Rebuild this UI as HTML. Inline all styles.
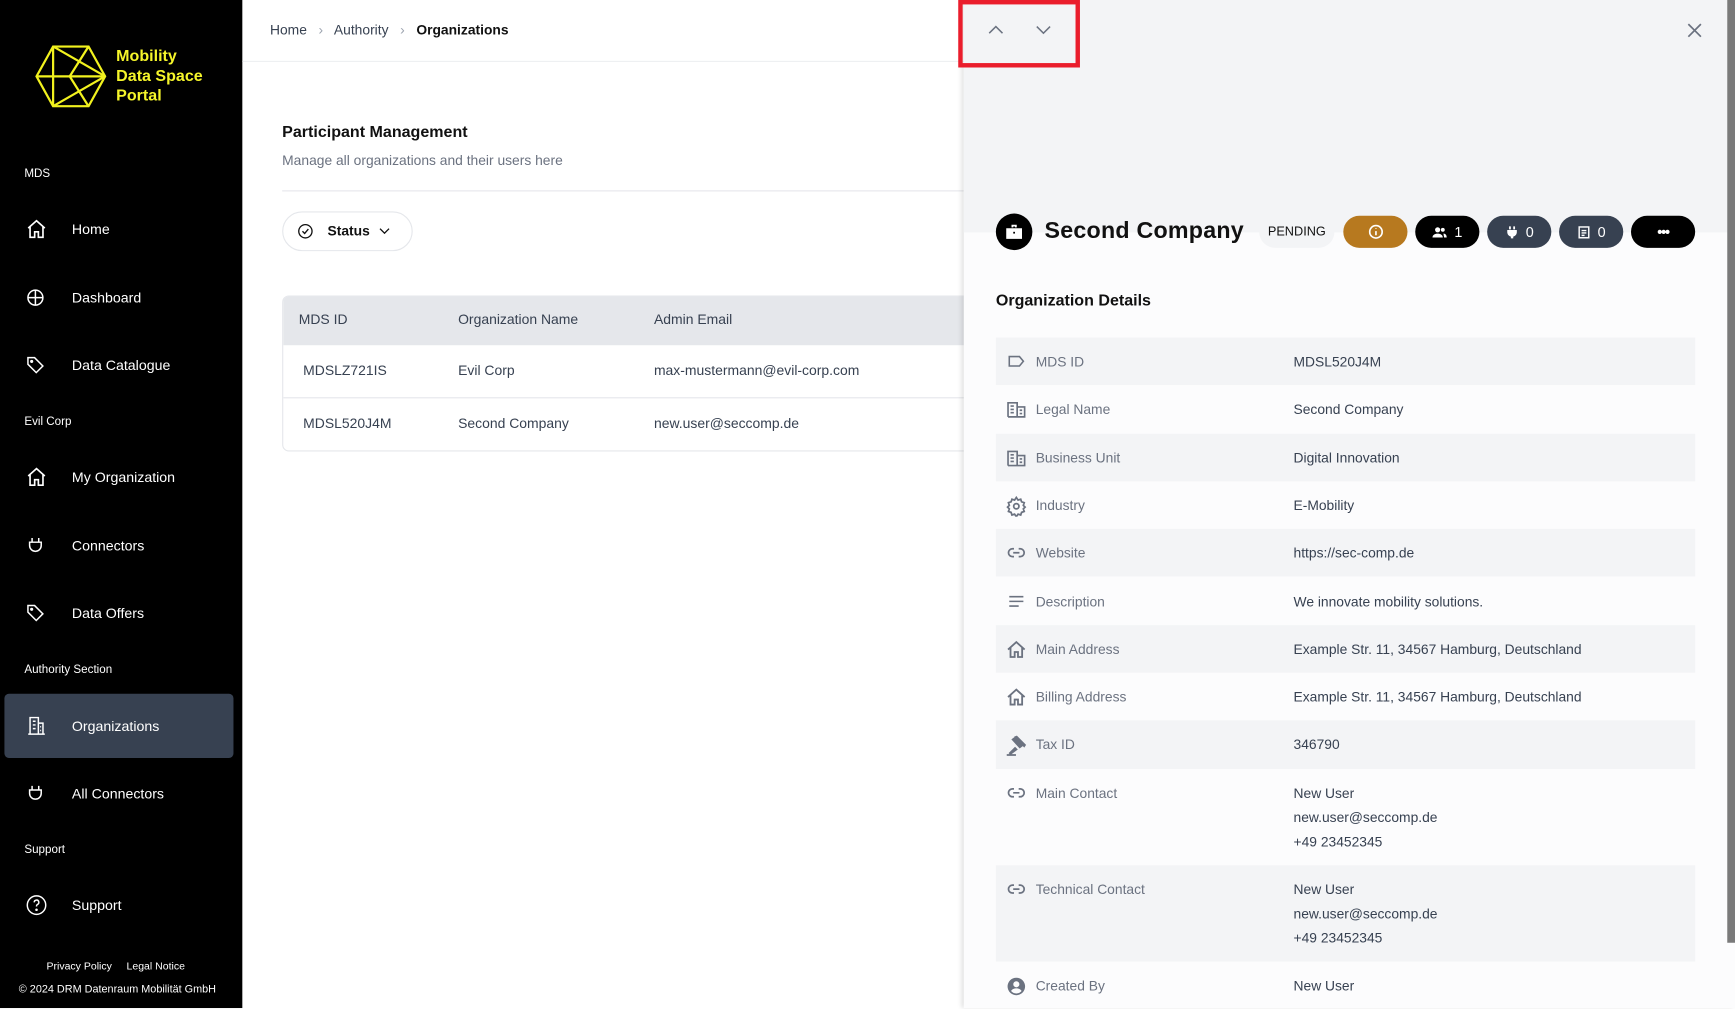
<!DOCTYPE html>
<html><head><meta charset="utf-8"><style>
*{box-sizing:border-box;margin:0;padding:0}
html,body{width:1735px;height:1008px;overflow:hidden;background:#fff;font-family:"Liberation Sans",sans-serif}
#w{position:absolute;left:0;top:0;width:1568px;height:911px;transform:scale(1.10651);transform-origin:0 0}
.a{position:absolute}
#sb{left:0;top:0;width:219px;height:911px;background:#000;color:#fff}
.sec{position:absolute;left:22px;font-size:10.5px;color:#fff}
.it{position:absolute;left:4px;width:207px;height:58px;font-size:12.8px;color:#fff}
.it span{position:absolute;left:61px;top:50%;transform:translateY(-50%)}
.it svg{position:absolute;left:19px;top:50%;transform:translateY(-50%)}
.t{font-size:12.6px;color:#374151}
.row{position:absolute;left:900px;width:632px;height:43.3px}
.row .l{position:absolute;left:36px;top:15px;font-size:12.5px;color:#6b7280}
.row .v{position:absolute;left:269px;top:15px;font-size:12.5px;color:#374151;line-height:22px;margin-top:-4px}
.row svg{position:absolute;left:9px;top:13px}
.g{background:#f3f4f6}
.pill{position:absolute;top:195px;height:29px;border-radius:15px;color:#fff;font-size:13px;display:flex;align-items:center;justify-content:center;gap:6px}
</style></head><body><div id="w">
<div id="sb" class="a">
<svg class="a" style="left:31px;top:41px" width="66" height="56" viewBox="0 0 66 56" fill="none" stroke="#f2f21e" stroke-width="2"><polygon points="17,1 49,1 64,28 49,55 17,55 2,28"/><line x1="2" y1="28" x2="64" y2="28"/><line x1="17" y1="1" x2="17" y2="55"/><path d="M17,1 L64,28 M49,1 L32,28 L49,55 M17,55 L64,28"/></svg>
<div class="a" style="left:105px;top:42px;color:#f5f52a;font-weight:bold;font-size:14.5px;line-height:18px">Mobility<br>Data Space<br>Portal</div>
<div class="sec" style="top:151px">MDS</div>
<div class="it" style="top:178px"><svg width="20" height="20" viewBox="0 0 24 24" fill="none" stroke="#fff" stroke-width="1.8"><path d="M3 11L12 3l9 8M5 9v12h5v-6h4v6h5V9"/></svg><span>Home</span></div>
<div class="it" style="top:240px"><svg width="18" height="18" viewBox="0 0 24 24" fill="none" stroke="#fff" stroke-width="1.8"><circle cx="12" cy="12" r="9"/><path d="M12 3v18M3 12h18"/></svg><span>Dashboard</span></div>
<div class="it" style="top:301px"><svg width="18" height="18" viewBox="0 0 24 24" fill="none" stroke="#fff" stroke-width="1.8"><path d="M3 3h8l10 10-8 8L3 11z"/><circle cx="7.5" cy="7.5" r="1"/></svg><span>Data Catalogue</span></div>
<div class="sec" style="top:375px">Evil Corp</div>
<div class="it" style="top:402px"><svg width="20" height="20" viewBox="0 0 24 24" fill="none" stroke="#fff" stroke-width="1.8"><path d="M3 11L12 3l9 8M5 9v12h5v-6h4v6h5V9"/></svg><span>My Organization</span></div>
<div class="it" style="top:464px"><svg width="18" height="18" viewBox="0 0 24 24" fill="none" stroke="#fff" stroke-width="1.8"><path d="M8 3v5M16 3v5M5 8h14v4a7 7 0 0 1-14 0z"/></svg><span>Connectors</span></div>
<div class="it" style="top:525px"><svg width="18" height="18" viewBox="0 0 24 24" fill="none" stroke="#fff" stroke-width="1.8"><path d="M3 3h8l10 10-8 8L3 11z"/><circle cx="7.5" cy="7.5" r="1"/></svg><span>Data Offers</span></div>
<div class="sec" style="top:599px">Authority Section</div>
<div class="it" style="top:627px;background:#374151;border-radius:4px"><svg width="20" height="20" viewBox="0 0 24 24" fill="none" stroke="#fff" stroke-width="1.6"><path d="M3 21h18M5 21V3h9v18M14 9h5v12M8 7h3M8 11h3M8 15h3M16 13h1M16 17h1"/></svg><span>Organizations</span></div>
<div class="it" style="top:688px"><svg width="18" height="18" viewBox="0 0 24 24" fill="none" stroke="#fff" stroke-width="1.8"><path d="M8 3v5M16 3v5M5 8h14v4a7 7 0 0 1-14 0z"/></svg><span>All Connectors</span></div>
<div class="sec" style="top:762px">Support</div>
<div class="it" style="top:789px"><svg width="20" height="20" viewBox="0 0 24 24" fill="none" stroke="#fff" stroke-width="1.6"><circle cx="12" cy="12" r="10"/><path d="M9.5 9a2.5 2.5 0 1 1 3.5 2.3c-.7.4-1 1-1 1.7v.5"/><circle cx="12" cy="17" r=".6" fill="#fff"/></svg><span>Support</span></div>
<div class="a" style="left:42px;top:868px;font-size:9.5px">Privacy Policy &nbsp;&nbsp;&nbsp; Legal Notice</div>
<div class="a" style="left:17px;top:889px;font-size:9.8px">© 2024 DRM Datenraum Mobilität GmbH</div>
</div>

<div class="a t" style="left:244px;top:20px;font-size:12.5px">Home <span style="color:#9ca3af;margin:0 7px">›</span> Authority <span style="color:#9ca3af;margin:0 7px">›</span> <b style="color:#111">Organizations</b></div>
<div class="a" style="left:219px;top:55px;width:652px;height:1px;background:#eef0f2"></div>
<div class="a" style="left:255px;top:112px;font-size:14.5px;font-weight:bold;color:#111">Participant Management</div>
<div class="a" style="left:255px;top:138px;font-size:12.5px;color:#6b7280">Manage all organizations and their users here</div>
<div class="a" style="left:255px;top:172px;width:616px;height:1px;background:#e5e7eb"></div>
<div class="a" style="left:255px;top:191px;width:118px;height:36px;border:1px solid #e5e7eb;border-radius:18px"></div>
<svg class="a" style="left:268px;top:201px" width="16" height="16" viewBox="0 0 24 24" fill="none" stroke="#111" stroke-width="1.8"><circle cx="12" cy="12" r="9"/><path d="M8 12l3 3 5-6"/></svg>
<div class="a" style="left:296px;top:202px;font-size:12.5px;font-weight:bold;color:#111">Status</div>
<svg class="a" style="left:340px;top:202px" width="15" height="14" viewBox="0 0 24 24" fill="none" stroke="#111" stroke-width="2"><path d="M5 8l7 7 7-7"/></svg>
<div class="a" style="left:255px;top:267px;width:640px;height:141px;border:1px solid #e5e7eb;border-radius:6px;overflow:hidden">
<div style="height:44px;background:#e5e7eb"></div><div style="height:48px;border-bottom:1px solid #e5e7eb"></div></div>
<div class="a t" style="left:270px;top:282px">MDS ID</div>
<div class="a t" style="left:414px;top:282px">Organization Name</div>
<div class="a t" style="left:591px;top:282px">Admin Email</div>
<div class="a t" style="left:274px;top:328px">MDSLZ721IS</div>
<div class="a t" style="left:414px;top:328px">Evil Corp</div>
<div class="a t" style="left:591px;top:328px">max-mustermann@evil-corp.com</div>
<div class="a t" style="left:274px;top:376px">MDSL520J4M</div>
<div class="a t" style="left:414px;top:376px">Second Company</div>
<div class="a t" style="left:591px;top:376px">new.user@seccomp.de</div>

<div class="a" style="left:871px;top:0;width:697px;height:911px;background:#fcfcfd;box-shadow:-2px 0 4px rgba(0,0,0,.12)"></div>
<div class="a" style="left:871px;top:0;width:691px;height:210px;background:#f3f4f6"></div>
<div class="a" style="left:1561px;top:0;width:7px;height:852px;background:#7a7a7a"></div>
<div class="a" style="left:866px;top:0;width:110px;height:61px;border:4px solid #ea1d2c"></div>
<svg class="a" style="left:890px;top:18px" width="20" height="18" viewBox="0 0 24 24" fill="none" stroke="#6b7280" stroke-width="1.8"><path d="M4 16l8-8 8 8"/></svg>
<svg class="a" style="left:933px;top:18px" width="20" height="18" viewBox="0 0 24 24" fill="none" stroke="#6b7280" stroke-width="1.8"><path d="M4 8l8 8 8-8"/></svg>
<svg class="a" style="left:1523px;top:19px" width="17" height="17" viewBox="0 0 24 24" fill="none" stroke="#6b7280" stroke-width="2.2"><path d="M4 4l16 16M20 4L4 20"/></svg>

<div class="a" style="left:900px;top:193px;width:33px;height:33px;border-radius:50%;background:#000"></div>
<svg class="a" style="left:907px;top:200px" width="19" height="19" viewBox="0 0 24 24" fill="#fff"><path d="M9 4h6v3h-2V6h-2v1H9zM3 8h18v12H3z"/><rect x="11" y="12" width="2" height="2" fill="#000"/></svg>
<div class="a" style="left:944px;top:197px;font-size:21px;font-weight:bold;color:#111;letter-spacing:0.2px">Second Company</div>
<div class="a" style="left:1138px;top:195px;width:68px;height:29px;border-radius:15px;background:#f3f4f6;font-size:11.5px;color:#111;display:flex;align-items:center;justify-content:center">PENDING</div>
<div class="pill" style="left:1214px;width:58px;background:#b7791f"><svg width="15" height="15" viewBox="0 0 24 24" fill="none" stroke="#fff" stroke-width="2.4"><circle cx="12" cy="12" r="9"/><path d="M12 11v6M12 7v1"/></svg></div>
<div class="pill" style="left:1279px;width:58px;background:#000"><svg width="14" height="14" viewBox="0 0 24 24" fill="#fff"><circle cx="9" cy="8" r="4"/><path d="M1 20c0-4 4-6 8-6s8 2 8 6z"/><circle cx="17" cy="8" r="3"/><path d="M18 14c3 0 5 2 5 6h-4z"/></svg>1</div>
<div class="pill" style="left:1344px;width:58px;background:#374151"><svg width="13" height="14" viewBox="0 0 24 24" fill="#fff"><path d="M7 2h3v5H7zM14 2h3v5h-3zM4 8h16v4a8 8 0 0 1-6 7v3h-4v-3a8 8 0 0 1-6-7z"/></svg>0</div>
<div class="pill" style="left:1409px;width:58px;background:#374151"><svg width="13" height="14" viewBox="0 0 24 24" fill="none" stroke="#fff" stroke-width="2.4"><rect x="4" y="3" width="16" height="18"/><path d="M8 9h8M8 13h8M8 17h5"/></svg>0</div>
<div class="pill" style="left:1474px;width:58px;background:#000;font-weight:bold;letter-spacing:-1px">•••</div>
<div class="a" style="left:900px;top:264px;font-size:14.5px;font-weight:bold;color:#111">Organization Details</div>

<div class="row g" style="top:305px"><svg width="19" height="17" viewBox="0 0 24 24" fill="none" stroke="#6b7280" stroke-width="2"><path d="M3 6h13l5 6-5 6H3z"/></svg><div class="l">MDS ID</div><div class="v">MDSL520J4M</div></div>
<div class="row" style="top:348.3px"><svg width="19" height="18" viewBox="0 0 24 24" fill="none" stroke="#6b7280" stroke-width="2"><path d="M2 21V4h11v17M13 9h9v12H2M5 8h4M5 12h4M5 16h4M16 13h3M16 17h3"/></svg><div class="l">Legal Name</div><div class="v">Second Company</div></div>
<div class="row g" style="top:391.6px"><svg width="19" height="18" viewBox="0 0 24 24" fill="none" stroke="#6b7280" stroke-width="2"><path d="M2 21V4h11v17M13 9h9v12H2M5 8h4M5 12h4M5 16h4M16 13h3M16 17h3"/></svg><div class="l">Business Unit</div><div class="v">Digital Innovation</div></div>
<div class="row" style="top:434.9px"><svg width="19" height="19" viewBox="0 0 24 24" fill="none" stroke="#6b7280" stroke-width="2"><circle cx="12" cy="12" r="3"/><path d="M12 2l2 3 3-1 1 3 3 1-1 3 2 2-2 2 1 3-3 1-1 3-3-1-2 3-2-3-3 1-1-3-3-1 1-3-2-2 2-2-1-3 3-1 1-3 3 1z"/></svg><div class="l">Industry</div><div class="v">E-Mobility</div></div>
<div class="row g" style="top:478.2px"><svg width="19" height="17" viewBox="0 0 24 24" fill="none" stroke="#6b7280" stroke-width="2.2"><path d="M9 7H7a5 5 0 0 0 0 10h2M15 7h2a5 5 0 0 1 0 10h-2M8 12h8"/></svg><div class="l">Website</div><div class="v">https://sec-comp.de</div></div>
<div class="row" style="top:521.5px"><svg width="19" height="17" viewBox="0 0 24 24" fill="none" stroke="#6b7280" stroke-width="2"><path d="M3 6h18M3 12h18M3 18h12"/></svg><div class="l">Description</div><div class="v">We innovate mobility solutions.</div></div>
<div class="row g" style="top:564.8px"><svg width="19" height="18" viewBox="0 0 24 24" fill="none" stroke="#6b7280" stroke-width="2.2"><path d="M2 12L12 3l10 9M5 10v11h5v-6h4v6h5V10"/></svg><div class="l">Main Address</div><div class="v">Example Str. 11, 34567 Hamburg, Deutschland</div></div>
<div class="row" style="top:608.1px"><svg width="19" height="18" viewBox="0 0 24 24" fill="none" stroke="#6b7280" stroke-width="2.2"><path d="M2 12L12 3l10 9M5 10v11h5v-6h4v6h5V10"/></svg><div class="l">Billing Address</div><div class="v">Example Str. 11, 34567 Hamburg, Deutschland</div></div>
<div class="row g" style="top:651.4px"><svg width="20" height="20" viewBox="0 0 24 24" fill="#6b7280"><path d="M9 2l3-1 10 10-2 3zM6 5l4-3 9 10-4 3zM10 13l3 3-8 6-2-2zM1 21h10v2H1z"/></svg><div class="l">Tax ID</div><div class="v">346790</div></div>
<div class="row" style="top:694.7px;height:87px"><svg width="19" height="17" viewBox="0 0 24 24" fill="none" stroke="#6b7280" stroke-width="2.2"><path d="M9 7H7a5 5 0 0 0 0 10h2M15 7h2a5 5 0 0 1 0 10h-2M8 12h8"/></svg><div class="l">Main Contact</div><div class="v">New User<br>new.user@seccomp.de<br>+49 23452345</div></div>
<div class="row g" style="top:781.7px;height:87px"><svg width="19" height="17" viewBox="0 0 24 24" fill="none" stroke="#6b7280" stroke-width="2.2"><path d="M9 7H7a5 5 0 0 0 0 10h2M15 7h2a5 5 0 0 1 0 10h-2M8 12h8"/></svg><div class="l">Technical Contact</div><div class="v">New User<br>new.user@seccomp.de<br>+49 23452345</div></div>
<div class="row" style="top:868.7px"><svg width="19" height="19" viewBox="0 0 24 24" fill="#6b7280"><path d="M12 2a10 10 0 1 0 0 20 10 10 0 0 0 0-20zm0 4a3.5 3.5 0 1 1 0 7 3.5 3.5 0 0 1 0-7zm0 14a8 8 0 0 1-6-2.8c1-2 3.5-3 6-3s5 1 6 3A8 8 0 0 1 12 20z"/></svg><div class="l">Created By</div><div class="v">New User</div></div>
</div></body></html>
